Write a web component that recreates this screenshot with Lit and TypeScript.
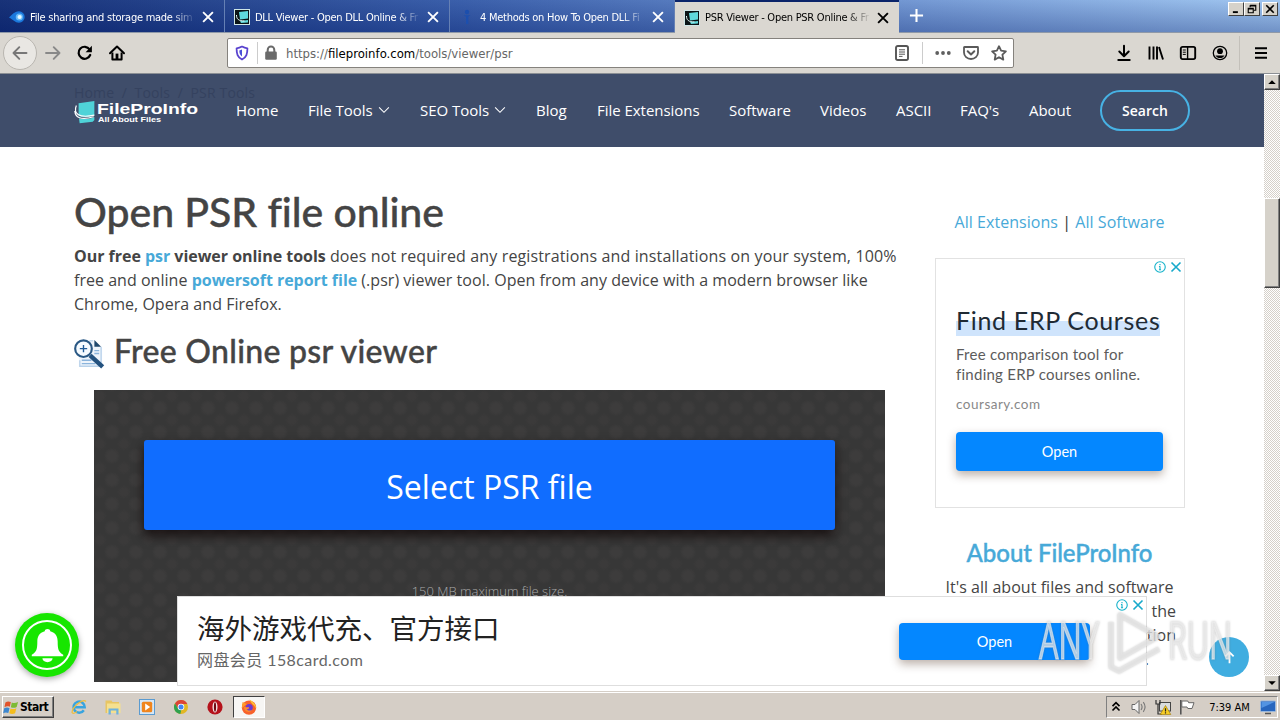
import { LitElement, html, css, svg } from "lit";
import { customElement, property } from "lit/decorators.js";

const ICONS = {
  back: svg`<path d="M14.500 8H1.500M7.300 2.200 1.500 8l5.800 5.800" fill="none" stroke="currentColor" stroke-width="1.900" stroke-linecap="round" stroke-linejoin="round"/>`,
  forward: svg`<path d="M1 8h13.500M8.700 2.200 14.500 8l-5.800 5.800" fill="none" stroke="currentColor" stroke-width="1.900" stroke-linecap="round" stroke-linejoin="round"/>`,
  reload: svg`<path d="M13.2 10A6 6 0 1 1 12.6 4.4" fill="none" stroke="currentColor" stroke-width="2.2" stroke-linecap="round"/><path d="M14.9 .8v6.4H8.6z" fill="currentColor"/>`,
  home: svg`<path d="M1 8.3 8 1.5l7 6.8" fill="none" stroke="currentColor" stroke-width="2" stroke-linecap="round" stroke-linejoin="round"/><path d="M3.4 7.5V14.6h9.2V7.5" fill="none" stroke="currentColor" stroke-width="2" stroke-linejoin="round"/><path d="M6.6 8.6h2.8V14H6.6z" fill="currentColor"/>`,
  shield: svg`<path d="M8 1.6c2 1.2 3.7 1.6 5.4 1.7 0 5.6-.8 9-5.4 11.2C3.400 12.300 2.600 8.900 2.600 3.300 4.300 3.200 6 2.800 8 1.600z" fill="none" stroke="#5a43cf" stroke-width="1.8" stroke-linejoin="round"/><path d="M8 4.600v6.800C6 10 5.400 8.400 5.300 5.600 6.300 5.400 7.200 5.100 8 4.600z" fill="#4a4fd8"/>`,
  lock: svg`<path d="M4.700 7V4.900a3.300 3.300 0 0 1 6.600 0V7" fill="none" stroke="#6a6a6a" stroke-width="2"/><rect x="2.200" y="6.600" width="11.600" height="8.200" rx="1.200" fill="#6a6a6a"/>`,
  reader: svg`<rect x="2" y="1" width="12" height="14" rx="1.800" fill="none" stroke="#555" stroke-width="1.900"/><path d="M5 4.800h6M5 7h6M5 9.200h6M5 11.400h3.500" stroke="#555" stroke-width="1"/>`,
  dots: svg`<g fill="#5f5f5f"><circle cx="2.200" cy="8" r="1.900"/><circle cx="8" cy="8" r="1.900"/><circle cx="13.800" cy="8" r="1.900"/></g>`,
  pocket: svg`<path d="M1.500 2h13c.5 0 .5 0 .5.500V7.500a7 6.500 0 0 1-14 0V2.500C1 2 1 2 1.500 2z" fill="none" stroke="#5a5a5a" stroke-width="1.800"/><path d="m4.700 6.300 3.300 3.100 3.300-3.100" fill="none" stroke="#5a5a5a" stroke-width="2" stroke-linecap="round" stroke-linejoin="round"/>`,
  star: svg`<path d="m8 1.200 2.100 4.500 4.800.6-3.500 3.400.9 4.900L8 12.200l-4.300 2.400.9-4.900L1.100 6.300l4.800-.6z" fill="none" stroke="#5a5a5a" stroke-width="1.800" stroke-linejoin="round"/>`,
  download: svg`<path d="M8 .8v10M3.300 6.500 8 11.200l4.700-4.700M2.300 15h11.400" fill="none" stroke="currentColor" stroke-width="2" stroke-linecap="round" stroke-linejoin="round"/>`,
  library: svg`<path d="M1.500 1.500v13M5.500 1.500v13M9 1.500v13M11 2l4 12.500" fill="none" stroke="currentColor" stroke-width="1.900"/>`,
  sidebar: svg`<rect x=".8" y="1.900" width="14.400" height="12.200" rx="1.800" fill="none" stroke="currentColor" stroke-width="1.900"/><path d="M7.600 2v12" stroke="currentColor" stroke-width="1.400"/><path d="M2.800 5h3M2.800 7.200h3M2.800 9.400h3" stroke="currentColor" stroke-width="1"/>`,
  account: svg`<circle cx="8" cy="8" r="6.700" fill="none" stroke="currentColor" stroke-width="1.300"/><circle cx="8" cy="6.200" r="2.900" fill="currentColor"/><path d="M3.400 10.500h9.200a5.400 5.400 0 0 1-9.200 0z" fill="currentColor"/>`,
  menu: svg`<path d="M2 3.200h12M2 8h12M2 12.800h12" stroke="currentColor" stroke-width="2"/>`,
  close: svg`<path d="M3.800 3.800l8.400 8.400M12.200 3.800l-8.400 8.400" stroke="currentColor" stroke-width="1.900" stroke-linecap="square"/>`,
  plus: svg`<path d="M8 1v14M1 8h14" stroke="currentColor" stroke-width="2.200"/>`,
  chevron: svg`<path d="m1.500 4.500 6.500 6.500 6.500-6.500" fill="none" stroke="currentColor" stroke-width="1.400"/>`,
  winMin: svg`<path d="M3 13h8" stroke="#000" stroke-width="3"/>`,
  winMax: svg`<path d="M5 2h9v8h-3M5 2v3M5 3h9" fill="none" stroke="#000" stroke-width="1.800"/><path d="M2 7h8v7H2zM2 7.800h8" fill="none" stroke="#000" stroke-width="1.800"/>`,
  winClose: svg`<path d="m2 2 12 12M14 2 2 14" stroke="#000" stroke-width="2.600"/>`,
  arrowUp: svg`<path d="M8 14V2.500M3.600 6.800 8 2.300l4.400 4.500" fill="none" stroke="#fff" stroke-width="1.900"/>`,
  triUp: svg`<path d="M2 11h12L8 5z" fill="#000"/>`,
  triDown: svg`<path d="M2 5h12l-6 6z" fill="#000"/>`,
  comet: svg`<path d="M0 8.500C3 6 5 2.500 10 2.300a5.700 5.700 0 0 1 0 11.400C6 13.700 4 10.500 0 8.500z" fill="#1b78dc"/><circle cx="10.300" cy="8" r="3.600" fill="#66b8f5"/><circle cx="10.600" cy="8" r="2.100" fill="#e8f8ff"/>`,
  fpi: svg`<rect x=".5" y=".5" width="15" height="15" fill="#0b1416" stroke="#cfe6e6"/><path d="m5 3 9-1v7.500L6 10.500z" fill="#5fd9dc"/><path d="M6 12l8-1v2.500L7 14z" fill="#5fd9dc"/><path d="M2.500 6c0 4 2 6 8 6" fill="none" stroke="#e9ffff" stroke-width="1"/>`,
  figure: svg`<circle cx="8" cy="3" r="2.200" fill="#1c4fae"/><path d="M4.500 6.200h7l-2.200 1.500V15H7V7.800z" fill="#1c4fae"/>`,
  adInfo: svg`<circle cx="8" cy="8" r="7" fill="none" stroke="#17b3cb" stroke-width="1.500"/><path d="M8 7v4.800M8 4v1.700M6.600 7.300H8M6.600 11.600h2.800" stroke="#17b3cb" stroke-width="1.500"/>`,
  adClose: svg`<path d="m2 2 12 12M14 2 2 14" stroke="#17a9cb" stroke-width="2.200"/>`,
  logo: svg`<path d="M3.500 1.800 15.500 0V11C11 12.600 7 12.600 3.500 11.500z" fill="#4fd3d8"/><path d="M3.800 13.300c4 .8 8 .6 11.700-1.100V14.500l-1.200 1.300L4.300 17z" fill="#4fd3d8"/><path d="M1.800 3.500C-.5 9 3 13.500 15.500 10.800M.600 7.500C1 12.500 5 15 15 12" fill="none" stroke="#fff" stroke-width=".9"/>`,
  finder: svg`<path d="M5.500 2h6l3 3v10h-12V10" fill="#eef4fb"/><path d="M10.500 1l3.500 3.500h-3.500z" fill="#20486c"/><path d="M10 1.500h-2M14 4.500V14.600H3V11.500" fill="none" stroke="#b9d2ea" stroke-width=".7"/><path d="M4 11.500h5M4 13.200h7M10.500 6.500h2.500M10.500 8h2.500" stroke="#8bb4dc" stroke-width=".7"/><circle cx="4.900" cy="5.500" r="4.300" fill="#f6fbff" stroke="#2a5884" stroke-width="1.100"/><path d="M4.900 3.600v3.800M3 5.500h3.800" stroke="#1f5a96" stroke-width=".7"/><path d="m8.300 9 6.500 5.900" stroke="#24527f" stroke-width="2.300"/>`,
  bell: svg`<path d="M8 .9c.7 0 1.100.4 1.200.9 2.300.6 3.200 2.300 3.200 4.500 0 3.200.3 4.600 2.400 5.700v.7H1.200v-.7c2.100-1.100 2.400-2.500 2.400-5.700 0-2.200.9-3.900 3.200-4.500.1-.5.500-.9 1.200-.9z" fill="#fff"/><path d="M5.800 13.500h4.400a2.200 1.700 0 0 1-4.400 0z" fill="#fff"/>`,
  windows: svg`<path d="M1.500 2.600C3.500 1.200 5.200 1.200 7.300 2.200L6.200 7.300C4.300 6.500 2.500 6.600.500 7.600z" fill="#e2532b"/><path d="M8.300 2.600c2 .9 4 .8 6.700-.5l-1.500 5.300c-2 1.100-4 1.200-6.200.3z" fill="#7dbb35"/><path d="M.2 8.900c2-1 3.700-1 5.700-.2l-1.300 5.200c-2-.9-3.700-.7-5.500.2z" fill="#3d87cf"/><path d="M7 9c2 .9 4 .8 6.200-.3L11.800 14c-2 1.100-4 1.100-6.200.2z" fill="#f4bd1e"/>`,
  ie: svg`<path d="M12.800 11.200A5.600 5.600 0 1 1 13.700 8.300H4" fill="none" stroke="#38a4df" stroke-width="2.500"/><path d="M15 2.500C12-.5 1.500 7 1 13.500c1 2 4.500-.5 5-1" fill="none" stroke="#eebd3c" stroke-width="1.200"/>`,
  folder: svg`<path d="M.5 1.500H6.500l1 1.500H14v11H.5z" fill="#e8c562"/><path d="M2 4.500H15.500v9.500H2z" fill="#f5e08f"/><path d="M3.500 15.500V9.500h10v6h-2.200V11.500H5.800v4z" fill="#6fb2dc"/>`,
  media: svg`<rect x=".5" y=".5" width="15" height="15" fill="#d6e7f6" stroke="#5b9bd0"/><rect x="2.800" y="2.800" width="10.400" height="10.400" rx="1.500" fill="#f0851d"/><path d="m6.200 4.600 5 3.400-5 3.400z" fill="#fff"/>`,
  chrome: svg`<circle cx="8" cy="8" r="7" fill="#e2b724"/><path d="M2 4.400A7 7 0 0 1 14.300 5H8L5 9.500z" fill="#dc4437"/><path d="M2 4.400 5.200 9.800 8.300 11 7.300 15A7 7 0 0 1 2 4.400z" fill="#2fa14f"/><circle cx="8" cy="8" r="3.300" fill="#fff"/><circle cx="8" cy="8" r="2.500" fill="#4285f4"/>`,
  opera: svg`<circle cx="8" cy="8" r="7.600" fill="#b5121b"/><ellipse cx="8" cy="8" rx="2.500" ry="5.500" fill="#f6e6e6"/><ellipse cx="8" cy="8" rx="1.100" ry="4.800" fill="#6e0a10"/>`,
  firefox: svg`<circle cx="8" cy="8.600" r="7.200" fill="#f8622b"/><path d="M8.500 .5C12 2.500 15.600 6 15 9.500 13 5.500 10.500 5.500 8.500 .5z" fill="#ffc233"/><path d="M1.600 3c-.6 2-.8 4-.5 6C3 8 3.500 6 6 5L3.500 4z" fill="#ff9a2b"/><circle cx="8.200" cy="8.600" r="3.600" fill="#6c3ad0"/><path d="M3 8c2 0 3 .5 5 .2.5 1.500-1 2-2.500 2 1 1.300 3 1.800 5.500.8-2 3.500-8 2-8-3z" fill="#fb8b2c"/>`,
  trayUp: svg`<path d="m4 7 4-4 4 4M4 12l4-4 4 4" fill="none" stroke="#000" stroke-width="1.900"/>`,
  sound: svg`<path d="M1 5.500h3l4-4v13l-4-4H1z" fill="#f3f3f3" stroke="#666" stroke-width="1"/><path d="M10 5c1.300 1.800 1.300 4.200 0 6M12.300 3.200c2.200 3 2.200 6.600 0 9.600" fill="none" stroke="#777" stroke-width="1.100"/>`,
  network: svg`<rect x="4.500" y="3.500" width="11" height="8.500" fill="#d9dcdd" stroke="#444"/><path d="M1 1v4h4V1M3 5v10h4" fill="none" stroke="#333" stroke-width="1.200"/><path d="M10.500 6.500 15.800 15.500H5.200z" fill="#f7cd26" stroke="#9b7600" stroke-width=".6"/><path d="M10.500 9.200v3.300M10.500 13.300v1.300" stroke="#222" stroke-width="1.200"/>`,
  flag: svg`<path d="M1.800 1v14.500" stroke="#555" stroke-width="1.600"/><path d="M2.800 2h6l.8 1.700H15L13 9.500H8.800L8 8H2.800z" fill="#fff" stroke="#666"/>`,
  desktop: svg`<rect x=".5" y="2" width="15" height="10.500" rx="1" fill="#2766be" stroke="#9ab8dd"/><path d="M1.500 3h13L1.500 9z" fill="#5394e2"/><path d="M5 14.500h6" stroke="#555" stroke-width="1.500"/>`,
};

@customElement("ui-icon")
export class UiIcon extends LitElement {
  @property() name = "close";

  static styles = css`
    :host {
      display: block;
      flex: none;
      width: 16px;
      height: 16px;
    }

    svg {
      display: block;
      width: 100%;
      height: 100%;
      overflow: visible;
    }
  `;

  render() {
    return html`<svg viewBox="0 0 16 16">${ICONS[this.name]}</svg>`;
  }
}

@customElement("browser-chrome")
export class BrowserChrome extends LitElement {
  // titles are already shortened to what fits before the fade
  tabs = [
    { icon: "comet", title: "File sharing and storage made sim" },
    { icon: "fpi", title: "DLL Viewer - Open DLL Online & Fr" },
    { icon: "figure", title: "4 Methods on How To Open DLL Fi" },
    { icon: "fpi", title: "PSR Viewer - Open PSR Online & Fr", active: true },
  ];

  static styles = css`
    :host {
      display: block;
      font-family: "DejaVu Sans Condensed", "DejaVu Sans", sans-serif;
      font-stretch: condensed;
    }

    .strip {
      display: flex;
      height: 32px;
      border-bottom: 1px solid #8f99a8;
      background:
        linear-gradient(rgba(255, 255, 255, 0.06), rgba(20, 40, 110, 0.32)),
        linear-gradient(90deg, #0a2670, #2f56a6 36%, #6d94d2 72%, #9cc4f0);
    }

    .tab {
      display: flex;
      align-items: center;
      box-sizing: border-box;
      width: 225px;
      height: 32px;
      padding: 2px 8px 0 9px;
      border-right: 1px solid #6580b4;
      color: #fff;
      font-size: 11px;
    }

    .tab.active {
      width: 224px;
      height: 33px;
      border-top: 2px solid #0a246a;
      padding-top: 0;
      border-right: 0;
      background: #dad7d1;
      color: #000;
    }

    .title {
      width: 166px;
      margin: 0 auto 0 5px;
      white-space: nowrap;
      letter-spacing: -0.26px;
      mask-image: linear-gradient(90deg, #000 85%, transparent 100%);
    }

    .new-tab {
      margin: 8px 0 0 10px;
      color: #fff;
      width: 15px;
      height: 15px;
    }

    .window-buttons {
      display: flex;
      margin: 2px 2px 0 auto;
    }

    .window-buttons span {
      display: grid;
      place-items: center;
      box-sizing: border-box;
      width: 16px;
      height: 14px;
      background: #d6d2ca;
      border: 1px solid;
      border-color: #fff #404040 #404040 #fff;
    }

    .window-buttons span:last-child {
      margin-left: 2px;
    }

    .window-buttons ui-icon {
      width: 10px;
      height: 10px;
    }

    .toolbar {
      display: flex;
      align-items: center;
      box-sizing: border-box;
      height: 41px;
      padding: 0 11px 0 3px;
      background: #dad7d1;
      border-bottom: 1px solid #8b8f94;
    }

    .back {
      display: grid;
      place-items: center;
      box-sizing: border-box;
      width: 34px;
      height: 34px;
      border: 1px solid #b9b6b0;
      border-radius: 50%;
      background: #e9e7e3;
      color: #777;
    }

    .forward {
      margin: 0 16px 0 8px;
      color: #888;
    }

    .home {
      margin-left: 16px;
    }

    .address {
      display: flex;
      align-items: center;
      box-sizing: border-box;
      width: 787px;
      height: 30px;
      margin: 0 102px 0 102px;
      padding: 0 6px;
      border: 1px solid #85827d;
      border-radius: 2px;
      background: #fff;
      color: #666;
      font-size: 13px;
    }

    .rule {
      width: 1px;
      height: 22px;
      background: #ccc;
      margin: 0 5px 0 7px;
    }

    .rule.wide {
      margin: 0 12px;
    }

    .url {
      flex: 1;
      margin-left: 7px;
    }

    .url b {
      font-weight: 400;
      color: #000;
    }

    .actions {
      display: flex;
      gap: 12px;
    }

    .tools {
      display: flex;
      gap: 16px;
    }

    .toolbar-rule {
      width: 1px;
      height: 34px;
      margin: 0 13px 0 auto;
      background: #c3c0ba;
    }
  `;

  render() {
    return html`
      <div class="strip">
        ${this.tabs.map(
          (tab) => html`
            <div class="tab ${tab.active ? "active" : ""}">
              <ui-icon name=${tab.icon}></ui-icon>
              <span class="title">${tab.title}</span>
              <ui-icon name="close"></ui-icon>
            </div>
          `,
        )}
        <ui-icon class="new-tab" name="plus"></ui-icon>
        <div class="window-buttons">
          <span><ui-icon name="winMin"></ui-icon></span>
          <span><ui-icon name="winMax"></ui-icon></span>
          <span><ui-icon name="winClose"></ui-icon></span>
        </div>
      </div>
      <div class="toolbar">
        <div class="back"><ui-icon name="back"></ui-icon></div>
        <ui-icon class="forward" name="forward"></ui-icon>
        <ui-icon name="reload"></ui-icon>
        <ui-icon class="home" name="home"></ui-icon>
        <div class="address">
          <ui-icon name="shield"></ui-icon>
          <i class="rule"></i>
          <ui-icon name="lock"></ui-icon>
          <span class="url">https://<b>fileproinfo.com</b>/tools/viewer/psr</span>
          <ui-icon name="reader"></ui-icon>
          <i class="rule wide"></i>
          <div class="actions">
            <ui-icon name="dots"></ui-icon>
            <ui-icon name="pocket"></ui-icon>
            <ui-icon name="star"></ui-icon>
          </div>
        </div>
        <div class="tools">
          <ui-icon name="download"></ui-icon>
          <ui-icon name="library"></ui-icon>
          <ui-icon name="sidebar"></ui-icon>
          <ui-icon name="account"></ui-icon>
        </div>
        <i class="toolbar-rule"></i>
        <ui-icon name="menu"></ui-icon>
      </div>
    `;
  }
}

@customElement("site-header")
export class SiteHeader extends LitElement {
  links = [
    { label: "Home" },
    { label: "File Tools", menu: true },
    { label: "SEO Tools", menu: true },
    { label: "Blog" },
    { label: "File Extensions" },
    { label: "Software" },
    { label: "Videos" },
    { label: "ASCII" },
    { label: "FAQ's" },
    { label: "About" },
  ];

  static styles = css`
    :host {
      display: block;
      position: relative;
      height: 73px;
      background: #3f4d6a;
      color: #fff;
      font-family: "Open Sans", sans-serif;
    }

    .crumbs {
      position: absolute;
      top: 9px;
      left: 74px;
      font-size: 14px;
      line-height: 20px;
      letter-spacing: 0.15px;
      color: #35425f;
      white-space: pre;
    }

    .bar {
      position: relative;
      display: flex;
      align-items: center;
      height: 73px;
      padding: 0 74px;
    }

    .brand {
      display: flex;
      width: 162px;
      padding-top: 5px;
    }

    .brand ui-icon {
      width: 21px;
      height: 21px;
    }

    .name {
      display: block;
      width: 104px;
      margin-left: 2px;
      height: 24px;
    }

    .name text {
      fill: #fff;
      font-family: "Liberation Sans", sans-serif;
      font-weight: 700;
    }

    nav {
      display: grid;
      grid-template-columns: 72px 112px 116px 61px 132px 91px 76px 64px 69px 71px;
      margin-top: -2px;
      font-size: 15px;
      letter-spacing: -0.03px;
      white-space: nowrap;
    }

    nav span {
      display: flex;
      align-items: center;
      gap: 5px;
    }

    nav ui-icon {
      width: 12px;
      height: 12px;
    }

    .search {
      box-sizing: border-box;
      width: 90px;
      height: 41px;
      border: 2px solid #47b2e4;
      border-radius: 21px;
      font-size: 14px;
      font-weight: 600;
      line-height: 37px;
      text-align: center;
    }
  `;

  render() {
    return html`
      <div class="crumbs">Home  /  Tools  /  PSR Tools</div>
      <div class="bar">
        <div class="brand">
          <ui-icon name="logo"></ui-icon>
          <svg class="name">
            <text x="0" y="13" font-size="15.500" textLength="101" lengthAdjust="spacingAndGlyphs">FileProInfo</text>
            <text x="1" y="21" font-size="8" textLength="63" lengthAdjust="spacingAndGlyphs">All About Files</text>
          </svg>
        </div>
        <nav>
          ${this.links.map(
            (link) => html`<span
              >${link.label}${link.menu
                ? html`<ui-icon name="chevron"></ui-icon>`
                : ""}</span
            >`,
          )}
        </nav>
        <div class="search">Search</div>
      </div>
    `;
  }
}

@customElement("viewer-page")
export class ViewerPage extends LitElement {
  static styles = css`
    :host {
      display: grid;
      grid-template-columns: 831px 261px;
      column-gap: 24px;
      padding: 0 74px;
      color: #444;
      font-family: "Open Sans", sans-serif;
      font-size: 16px;
      line-height: 24px;
    }

    a {
      color: #47a9d8;
    }

    h1,
    h2,
    h3 {
      margin: 0;
      font-family: Lato, sans-serif;
      font-weight: 500;
      white-space: nowrap;
      -webkit-text-stroke: 0.4px;
    }

    h1 {
      margin-top: 41px;
      font-size: 41px;
      line-height: 48px;
      letter-spacing: -0.05px;
    }

    p {
      margin: 8px 0 0;
    }

    .intro {
      white-space: nowrap;
      letter-spacing: 0.03px;
    }

    .intro b {
      letter-spacing: -0.03px;
    }

    .lead {
      letter-spacing: 0.13px;
    }

    h2 {
      display: flex;
      align-items: center;
      gap: 9px;
      margin-top: 15px;
      font-size: 32px;
      line-height: 40px;
      letter-spacing: 0.3px;
    }

    h2 ui-icon {
      width: 31px;
      height: 31px;
      margin-top: 5px;
    }

    .drop {
      box-sizing: border-box;
      width: 791px;
      height: 292px;
      margin: 19px 0 0 20px;
      padding: 50px 50px 0;
      background:
        radial-gradient(circle, #3d3c3c 25%, transparent 50%) 6px 6px / 24px 24px,
        radial-gradient(circle, #3b3a3a 20%, transparent 40%) 18px 18px / 24px 24px,
        #373737;
      color: #a9a9a9;
      font-size: 13px;
      text-align: center;
    }

    .select {
      height: 90px;
      border-radius: 3px;
      background: #106dff;
      box-shadow: 0 6px 12px rgba(15, 5, 5, 0.75);
      color: #fff;
      font-size: 32px;
      line-height: 93px;
    }

    .limit {
      margin-top: 49px;
      font-weight: 300;
    }

    aside {
      text-align: center;
    }

    .links {
      margin-top: 63px;
      color: #333;
      letter-spacing: 0.05px;
    }

    .ad {
      position: relative;
      box-sizing: border-box;
      width: 250px;
      height: 250px;
      margin: 24px 0 0 6px;
      padding: 46px 20px 0;
      border: 1px solid #e2e2e2;
      text-align: left;
      font-family: Lato, sans-serif;
    }

    .choices {
      position: absolute;
      top: 2px;
      right: 2px;
      display: flex;
      gap: 4px;
    }

    .choices ui-icon {
      width: 12px;
      height: 12px;
    }

    .ad-title {
      display: inline-block;
      background: linear-gradient(transparent 50%, #cfe4fc 50%);
      color: #202a34;
      font-size: 25px;
      line-height: 31px;
      letter-spacing: 0.67px;
      white-space: nowrap;
    }

    .ad-text {
      margin-top: 8px;
      color: #5c5c5c;
      font-size: 15px;
      line-height: 20px;
      letter-spacing: 0.25px;
      white-space: nowrap;
    }

    .ad-host {
      margin-top: 10px;
      color: #888;
      font-size: 13.5px;
      line-height: 20px;
      letter-spacing: 0.5px;
    }

    .ad-open {
      width: 207px;
      height: 39px;
      margin-top: 18px;
      border-radius: 4px;
      background: #0487ff;
      box-shadow: 0 4px 10px rgba(60, 30, 10, 0.35);
      color: #fff;
      font-size: 14.5px;
      line-height: 40px;
      text-align: center;
    }

    h3 {
      margin-top: 30px;
      color: #47a9d8;
      font-size: 24px;
      line-height: 29px;
      letter-spacing: -0.05px;
    }

    .about {
      margin: 8px 0 0;
      letter-spacing: 0.05px;
    }

    .rest {
      padding-right: 14px;
      text-align: right;
    }

    .rest.last {
      padding-right: 41px;
    }
  `;

  render() {
    return html`
      <main>
        <h1>Open PSR file online</h1>
        <p class="intro">
          <b>Our free <a>psr</a> viewer online tools</b>
          <span class="lead"
            >does not required any registrations and installations on your
            system, 100%</span
          ><br />
          free and online <b><a>powersoft report file</a></b> (.psr) viewer
          tool. Open from any device with a modern browser like<br />
          Chrome, Opera and Firefox.
        </p>
        <h2><ui-icon name="finder"></ui-icon>Free Online psr viewer</h2>
        <div class="drop">
          <div class="select">Select PSR file</div>
          <div class="limit">150 MB maximum file size.</div>
        </div>
      </main>
      <aside>
        <div class="links"><a>All Extensions</a> | <a>All Software</a></div>
        <div class="ad">
          <div class="choices">
            <ui-icon name="adInfo"></ui-icon><ui-icon name="adClose"></ui-icon>
          </div>
          <div class="ad-title">Find ERP Courses</div>
          <div class="ad-text">Free comparison tool for<br />finding ERP courses online.</div>
          <div class="ad-host">coursary.com</div>
          <div class="ad-open">Open</div>
        </div>
        <h3>About FileProInfo</h3>
        <div class="about">It's all about files and software</div>
        <div class="rest">the</div>
        <div class="rest">tion</div>
        <div class="rest last">.</div>
      </aside>
    `;
  }
}

@customElement("page-overlays")
export class PageOverlays extends LitElement {
  static styles = css`
    .bell {
      position: absolute;
      left: 15px;
      top: 539px;
      display: grid;
      place-items: center;
      width: 64px;
      height: 64px;
      border-radius: 50%;
      background: #17e600;
      box-shadow: 0 2px 6px rgba(0, 0, 0, 0.35);
    }

    .ring {
      display: grid;
      place-items: center;
      width: 46px;
      height: 46px;
      border: 2px solid #fff;
      border-radius: 50%;
    }

    .ring ui-icon {
      width: 37px;
      height: 37px;
    }

    .banner {
      position: absolute;
      left: 177px;
      top: 522px;
      display: flex;
      align-items: center;
      box-sizing: border-box;
      width: 970px;
      height: 90px;
      padding: 0 56px 0 19px;
      border: 1px solid #dedede;
      background: #fff;
      font-family: Lato, "Noto Sans CJK SC", sans-serif;
    }

    .copy {
      flex: 1;
    }

    .headline {
      color: #222;
      font-size: 27.5px;
      line-height: 38px;
    }

    .sub {
      color: #666;
      font-size: 16px;
      line-height: 24px;
      letter-spacing: 0.42px;
    }

    .open {
      width: 191px;
      height: 37px;
      margin-top: 1px;
      border-radius: 4px;
      background: #0487ff;
      box-shadow: 0 4px 10px rgba(60, 30, 10, 0.35);
      color: #fff;
      font-size: 14.5px;
      line-height: 37px;
      text-align: center;
    }

    .choices {
      position: absolute;
      top: 2px;
      right: 2px;
      display: flex;
      gap: 4px;
    }

    .choices ui-icon {
      width: 12px;
      height: 12px;
    }

    .top {
      position: absolute;
      left: 1209px;
      top: 563px;
      display: grid;
      place-items: center;
      width: 40px;
      height: 40px;
      border-radius: 50%;
      background: #40ade0;
    }

    .top ui-icon {
      width: 15px;
      height: 15px;
    }

    .mark {
      position: absolute;
      left: 1036px;
      top: 536px;
      width: 200px;
      height: 66px;
      filter: drop-shadow(0 0 1px rgba(90, 90, 90, 0.4));
    }

    .mark text {
      fill: rgba(238, 238, 238, 0.7);
      stroke: rgba(238, 238, 238, 0.55);
      stroke-width: 1.6px;
      font-family: "Open Sans", sans-serif;
      font-size: 51px;
    }

    .mark path {
      fill: none;
      stroke: rgba(232, 232, 232, 0.75);
      stroke-width: 5;
      stroke-linejoin: round;
    }
  `;

  render() {
    return html`
      <div class="bell">
        <div class="ring"><ui-icon name="bell"></ui-icon></div>
      </div>
      <div class="banner">
        <div class="copy">
          <div class="headline">海外游戏代充、官方接口</div>
          <div class="sub">网盘会员 158card.com</div>
        </div>
        <div class="open">Open</div>
        <div class="choices">
          <ui-icon name="adInfo"></ui-icon><ui-icon name="adClose"></ui-icon>
        </div>
      </div>
      <div class="top"><ui-icon name="arrowUp"></ui-icon></div>
      <svg class="mark" viewBox="0 0 200 66">
        <path d="M84 5v43l38-21.500z" />
        <path d="M75 12v45l8 4 40-22" />
        <text x="3" y="49" textLength="60" lengthAdjust="spacingAndGlyphs">ANY</text>
        <text x="132" y="49" textLength="64" lengthAdjust="spacingAndGlyphs">RUN</text>
      </svg>
    `;
  }
}

@customElement("task-bar")
export class TaskBar extends LitElement {
  static styles = css`
    :host {
      display: flex;
      align-items: center;
      box-sizing: border-box;
      padding: 2px 2px 0;
      background: #d5cec6;
      border-top: 1px solid #d5cec6;
      box-shadow: inset 0 1px #fff;
      font-family: "DejaVu Sans Condensed", "DejaVu Sans", sans-serif;
      font-stretch: condensed;
    }

    .start {
      display: flex;
      align-items: center;
      gap: 1px;
      box-sizing: border-box;
      width: 52px;
      height: 22px;
      padding-left: 1px;
      border: 1px solid;
      border-color: #fff #404040 #404040 #fff;
      box-shadow: inset -1px -1px #808080;
      font-size: 12px;
      font-weight: 700;
      letter-spacing: -0.5px;
      color: #000;
    }

    .start ui-icon {
      width: 15px;
      height: 15px;
    }

    .launch {
      display: flex;
      align-items: center;
      gap: 18px;
      margin-left: 17px;
    }

    .running {
      display: grid;
      place-items: center;
      box-sizing: border-box;
      width: 32px;
      height: 22px;
      margin-left: 10px;
      border: 1px solid;
      border-color: #404040 #fff #fff #404040;
      background: #f7f6f4;
    }

    .tray {
      display: flex;
      align-items: center;
      box-sizing: border-box;
      width: 172px;
      height: 22px;
      margin-left: auto;
      padding: 0 1px 0 2px;
      border: 1px solid;
      border-color: #808080 #fff #fff #808080;
      font-size: 11px;
      color: #000;
    }

    .tray ui-icon + ui-icon {
      margin-left: 8px;
    }

    .tray .up {
      width: 14px;
      height: 14px;
    }

    .clock {
      margin: 0 auto;
      padding-left: 4px;
      white-space: nowrap;
    }
  `;

  render() {
    return html`
      <div class="start"><ui-icon name="windows"></ui-icon>Start</div>
      <div class="launch">
        ${["ie", "folder", "media", "chrome", "opera"].map(
          (name) => html`<ui-icon name=${name}></ui-icon>`,
        )}
      </div>
      <div class="running"><ui-icon name="firefox"></ui-icon></div>
      <div class="tray">
        <ui-icon class="up" name="trayUp"></ui-icon>
        <ui-icon name="sound"></ui-icon>
        <ui-icon name="network"></ui-icon>
        <ui-icon name="flag"></ui-icon>
        <span class="clock">7:39 AM</span>
        <ui-icon name="desktop"></ui-icon>
      </div>
    `;
  }
}

@customElement("app-root")
export class AppRoot extends LitElement {
  static styles = css`
    :host {
      display: grid;
      grid-template-rows: 74px 617px 29px;
      width: 1280px;
      height: 720px;
      overflow: hidden;
      background: #fff;
    }

    .window {
      position: relative;
      display: grid;
      grid-template-columns: 1264px 16px;
      overflow: hidden;
    }

    .page {
      height: 617px;
      overflow: hidden;
    }

    .scrollbar {
      display: flex;
      flex-direction: column;
      background: repeating-conic-gradient(#fff 0 25%, #d5d0c9 0 50%) 0 0 / 2px 2px;
    }

    .button,
    .thumb {
      box-sizing: border-box;
      background: #d6d2ca;
      border: 1px solid;
      border-color: #fff #404040 #404040 #fff;
      box-shadow: inset -1px -1px #808080;
    }

    .button {
      display: grid;
      place-items: center;
      height: 16px;
    }

    .button ui-icon {
      width: 10px;
      height: 10px;
    }

    .thumb {
      height: 90px;
      margin: 108px 0 auto;
    }
  `;

  render() {
    return html`
      <browser-chrome></browser-chrome>
      <div class="window">
        <div class="page">
          <site-header></site-header>
          <viewer-page></viewer-page>
        </div>
        <div class="scrollbar">
          <div class="button"><ui-icon name="triUp"></ui-icon></div>
          <div class="thumb"></div>
          <div class="button"><ui-icon name="triDown"></ui-icon></div>
        </div>
        <page-overlays></page-overlays>
      </div>
      <task-bar></task-bar>
    `;
  }
}
